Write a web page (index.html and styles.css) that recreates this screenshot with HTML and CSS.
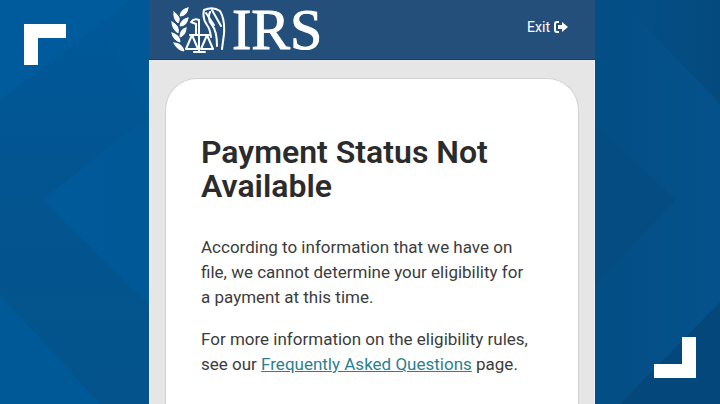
FILE: index.html
```html
<!DOCTYPE html>
<html lang="en">
<head>
    <meta charset="UTF-8">
    <meta name="viewport" content="width=device-width, initial-scale=1.0">
    <title>Payment Status Not Available</title>
    <link rel="stylesheet" href="styles.css">
</head>
<body>
    <svg class="backdrop" viewBox="0 0 720 404" preserveAspectRatio="none" aria-hidden="true">
        <defs>
            <linearGradient id="base" x1="0" x2="1">
                <stop offset="0" stop-color="#005a9b"/>
                <stop offset="0.2" stop-color="#005897"/>
                <stop offset="0.85" stop-color="#044e86"/>
                <stop offset="1" stop-color="#04528c"/>
            </linearGradient>
            <linearGradient id="shade" x1="0" y1="0" x2="0" y2="1">
                <stop offset="0" stop-color="#005898"/>
                <stop offset="0.5" stop-color="#03548f"/>
                <stop offset="1" stop-color="#04538c"/>
            </linearGradient>
            <linearGradient id="fade" x1="0" x2="1">
                <stop offset="0" stop-color="#044f88"/>
                <stop offset="1" stop-color="#044a7e"/>
            </linearGradient>
        </defs>
        <rect width="720" height="404" fill="url(#base)"/>
        <path d="M0 0H130L0 100Z" fill="#005b9d"/>
        <path d="M0 100L100 25L149 115L43 200L149 305V404H100L0 295Z" fill="url(#shade)"/>
        <path d="M0 295L100 404H0Z" fill="#005997"/>
        <path d="M620 0H720V104Z" fill="url(#fade)"/>
        <path d="M595 125L675 200L595 285Z" fill="#044c82"/>
        <path d="M720 302V404H620Z" fill="#04487b"/>
    </svg>
    <div class="layout">
        <div class="side">
            <div class="corner corner-top"></div>
        </div>
        <div class="screen">
            <header>
                <div class="logo">
                    <svg width="55" height="48" viewBox="0 0 55 48" fill="none" stroke="#fff" stroke-linecap="round" stroke-linejoin="round" aria-hidden="true">
                        <!-- olive branch -->
                        <g fill="#fff" stroke="#fff">
                            <path d="M17 2Q10 3 9 10Q16 10 17 2Z"/>
                            <path d="M3 6Q2 13 7 17Q11 12 3 6Z"/>
                            <path d="M17 12Q10 13 9 20Q16 20 17 12Z"/>
                            <path d="M1 16Q1 23 7 27Q9 20 1 16Z"/>
                            <path d="M15 22Q9 23 9 31Q15 29 15 22Z"/>
                            <path d="M1 27Q2 34 9 36Q9 29 1 27Z"/>
                            <path d="M3 37Q6 44 13 45Q11 37 3 37Z"/>
                        </g>
                        <!-- eagle head and wing -->
                        <path stroke-width="2" d="M20 16Q23 12 28 14V24M20 16L25 18V28"/>
                        <path stroke-width="2" d="M33 4Q42 0 49 5Q54 13 53 28L51 43M33 4Q31 12 36 19Q39 23 40 31M39 6Q36 13 41 19Q46 25 46 40"/>
                        <path stroke-width="2" d="M35 7L43 19M41 4L50 20"/>
                        <!-- scales -->
                        <path stroke-width="2" d="M19 29H38M28 22V46M21 29L15 43H27ZM36 29L30 43H42ZM23 46H34"/>
                    </svg>
                    <span>IRS</span>
                </div>
                <a class="exit" href="#">
                    Exit
                    <svg width="14" height="12" viewBox="0 0 14 12" aria-hidden="true">
                        <path d="M5 1H3Q1 1 1 3V9Q1 11 3 11H5" fill="none" stroke="#fff" stroke-width="2"/>
                        <path d="M4 4H8V1L14 6L8 11V8H4Z" fill="#fff"/>
                    </svg>
                </a>
            </header>
            <main>
                <h1>Payment Status Not Available</h1>
                <p>According to information that we have on file, we cannot determine your eligibility for a payment at this time.</p>
                <p>For more information on the eligibility rules, see our <a href="#">Frequently Asked Questions</a> page.</p>
            </main>
        </div>
        <div class="side side-right">
            <div class="corner corner-bottom"></div>
        </div>
    </div>
</body>
</html>
```
FILE: styles.css
```css
*{
    box-sizing: border-box;
    padding: 0;
    margin: 0;
}

body{
    font-family: Roboto, "Liberation Sans", sans-serif;
    color: #3b3c3e;
    background-color: #005596;
}

.backdrop{
    position: fixed;
    inset: 0;
    width: 100%;
    height: 100%;
    z-index: -1;
}

.layout{
    display: grid;
    grid-template-columns: 149fr 446fr 125fr;
    min-height: 100vh;
}

.side{
    display: flex;
    padding: 24px;
}

.side-right{
    align-items: flex-end;
    justify-content: flex-end;
    padding-bottom: 26px;
}

.corner{
    width: 42px;
    height: 41px;
    border: 0 solid #fff;
}

.corner-top{
    border-width: 14px 0 0 14px;
}

.corner-bottom{
    border-width: 0 14px 14px 0;
}

.screen{
    display: flex;
    flex-direction: column;
    background-color: #e6e6e7;
    border: solid #e8f1fa;
    border-width: 0 1px;
}

header{
    display: flex;
    align-items: center;
    justify-content: space-between;
    height: 60px;
    margin: 0 -1px;
    padding: 0 27px 0 22px;
    background-color: #244f7b;
    border-bottom: 1px solid #173f69;
}

.logo{
    display: flex;
    align-items: center;
    gap: 6px;
    font-family: "Liberation Serif", serif;
    font-size: 58px;
    line-height: 58px;
    color: #fff;
    -webkit-text-stroke: 1px #fff;
}

.exit{
    display: flex;
    align-items: center;
    gap: 4px;
    font-size: 14px;
    line-height: 16px;
    color: #fff;
    text-decoration: none;
    margin-bottom: 5px;
}

main{
    flex: 1;
    margin: 18px 15px 0;
    padding: 56px 46px 24px 35px;
    background-color: #fff;
    border: 1px solid #d3d3d3;
    border-bottom: none;
    border-radius: 32px 32px 0 0;
}

h1{
    font-size: 32px;
    font-weight: 600;
    line-height: 34px;
    color: #2b2b2c;
    margin-bottom: 32px;
}

p{
    font-size: 17px;
    line-height: 25px;
    margin-bottom: 17px;
}

p:last-child{
    margin-bottom: 0;
}

main a{
    color: #2b7f92;
}
```
